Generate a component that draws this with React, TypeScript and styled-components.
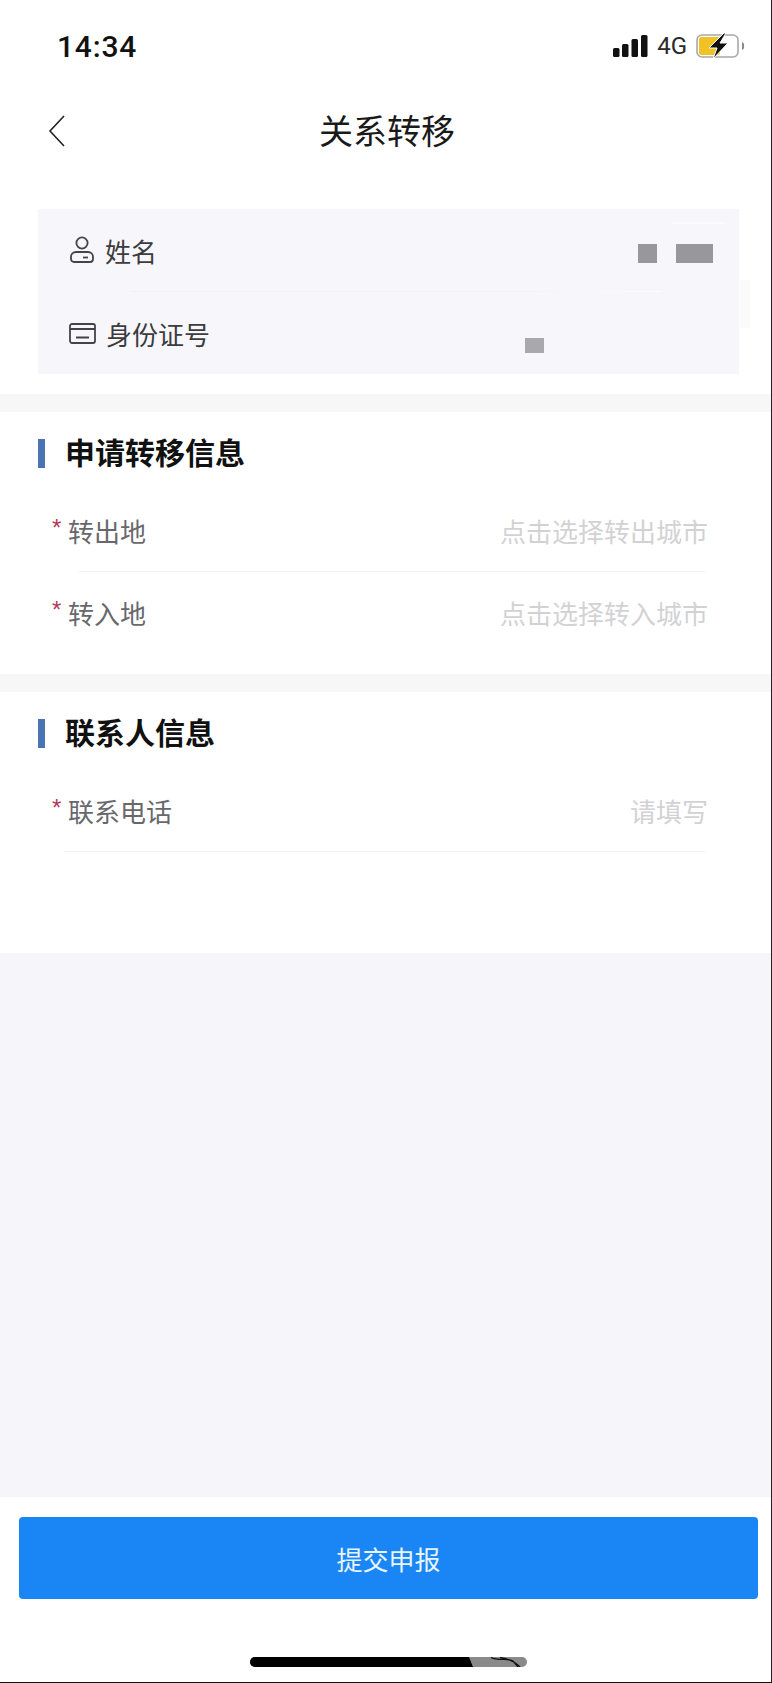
import React from "react";
import styled, { createGlobalStyle } from "styled-components";

const GlobalStyle = createGlobalStyle`
    html, body {
        margin: 0;
        padding: 0;
        background: #fff;
    }
    body {
        font-family: "Liberation Sans", "Noto Sans CJK SC", sans-serif;
    }
`;

const Page = styled.div`
    width: 772px;
    height: 1683px;
    box-sizing: border-box;
    display: flex;
    flex-direction: column;
    overflow: hidden;
    background: #f6f6fa;
    border-right: 1px solid #222;
    border-bottom: 1px solid #111;
    font-family: "Noto Sans CJK SC", sans-serif;
`;

const Top = styled.div`
    background: #fff;
    padding-bottom: 20px;
`;

const StatusBar = styled.div`
    height: 46px;
    padding: 23px 26px 0 57px;
    display: flex;
    align-items: center;
    justify-content: space-between;
`;

const Time = styled.span`
    font-family: Roboto, sans-serif;
    font-weight: 500;
    font-size: 30px;
    letter-spacing: 0.8px;
    color: #111;
`;

const StatusIcons = styled.div`
    display: flex;
    align-items: center;
    gap: 9px;
`;

const Network = styled.span`
    font-family: Roboto, sans-serif;
    font-size: 24px;
    color: #2a2a2a;
`;

const NavBar = styled.div`
    position: relative;
    height: 69px;
    margin-top: 26px;
    display: flex;
    align-items: center;
    justify-content: center;
`;

const BackIcon = styled.svg`
    position: absolute;
    left: 48px;
    top: 20px;
`;

const NavTitle = styled.h1`
    margin: 0;
    padding-left: 3px;
    font-size: 34px;
    font-weight: 400;
    color: #1a1a1a;
`;

const IdCard = styled.div`
    position: relative;
    margin: 45px 32px 0 38px;
    height: 165px;
    background: #f7f7fb;
    display: flex;
    flex-direction: column;

    /* leftovers of the retouching over the original id values */
    &::before {
        content: "";
        position: absolute;
        top: 13px;
        right: 14px;
        width: 53px;
        height: 2px;
        background: #fbfbfd;
    }
    &::after {
        content: "";
        position: absolute;
        top: 71px;
        right: -11px;
        width: 11px;
        height: 48px;
        background: #fbfbfc;
    }
`;

const IdRow = styled.div`
    flex: 1;
    display: flex;
    align-items: center;
    padding: 0 26px 0 31px;
`;

const IdDivider = styled.div`
    height: 1px;
    margin: 0 78px 0 92px;
    background: linear-gradient(90deg, #f1f1f5 70%, #fdfdfe);
`;

const IdLabel = styled.span`
    margin-left: 10px;
    font-size: 26px;
    color: #3c3c40;
`;

const Masked = styled.div<{ $offset: number; $drop: number }>`
    margin-left: auto;
    margin-right: ${props => props.$offset}px;
    margin-top: ${props => props.$drop}px;
    display: flex;
    gap: 19px;
`;

const MaskBlock = styled.div<{ $w: number; $h: number; $tone: string }>`
    width: ${props => props.$w}px;
    height: ${props => props.$h}px;
    background: ${props => props.$tone};
`;

const Band = styled.div`
    height: 18px;
    background: #f7f7f8;
`;

const Section = styled.section<{ $height: number }>`
    height: ${props => props.$height}px;
    background: #fff;
    padding-top: 27px;
    box-sizing: border-box;
`;

const SectionHead = styled.div`
    display: flex;
    align-items: center;
    gap: 20px;
    padding-left: 38px;
    height: 29px;
`;

const Accent = styled.div`
    width: 7px;
    height: 29px;
    background: #4a74b4;
`;

const SectionTitle = styled.h2`
    margin: 0;
    padding-bottom: 5px;
    font-size: 30px;
    font-weight: 700;
    color: #111;
`;

const Rows = styled.div`
    margin-top: 22px;
`;

const Field = styled.div`
    position: relative;
    height: 81px;
    margin: 0 63px 0 68px;
    display: flex;
    align-items: center;
    justify-content: space-between;
`;

const FieldDivider = styled.div<{ $left: number }>`
    height: 1px;
    margin: 0 66px 0 ${props => props.$left}px;
    background: #f3f3f5;
`;

const Star = styled.span`
    position: absolute;
    left: -16px;
    top: 25px;
    font-family: "Liberation Sans", sans-serif;
    font-size: 24px;
    line-height: 25px;
    color: #b5395a;
`;

const FieldLabel = styled.span`
    font-size: 26px;
    color: #68686c;
`;

const Placeholder = styled.span`
    font-size: 26px;
    color: #d2d2d5;
`;

const Spacer = styled.div`
    flex: 1;
`;

const Footer = styled.div`
    position: relative;
    height: 185px;
    background: #fff;
    padding: 20px 13px 0 19px;
    box-sizing: border-box;
`;

const SubmitButton = styled.button`
    width: 100%;
    height: 82px;
    border: 0;
    border-radius: 4px;
    background: #1a86f5;
    color: #e8f4ff;
    font-family: inherit;
    font-size: 26px;
`;

const HomeIndicator = styled.svg`
    position: absolute;
    left: 250px;
    bottom: 15px;
`;

const PersonIcon = () => (
    <svg width="26" height="28" viewBox="0 0 26 28" fill="none" stroke="#444448" strokeWidth="1.8">
        <circle cx="13" cy="7" r="5.6" />
        <path d="M7 16h12a5 5 0 0 1 5 5v2a3 3 0 0 1-3 3H5a3 3 0 0 1-3-3v-2a5 5 0 0 1 5-5z" />
        <path d="M14 21.5h5" />
    </svg>
);

const CardIcon = () => (
    <svg width="27" height="21" viewBox="0 0 27 21" fill="none" stroke="#444448" strokeWidth="1.8">
        <rect x="1" y="1" width="25" height="19" rx="2" />
        <path d="M1 6h25M7 14.5h13" />
    </svg>
);

const SignalIcon = () => (
    <svg width="35" height="22" viewBox="0 0 35 22" fill="#111">
        <rect x="0" y="13" width="6.5" height="9" rx="1.5" />
        <rect x="9" y="9" width="6.5" height="13" rx="1.5" />
        <rect x="18.5" y="4" width="6.5" height="18" rx="1.5" />
        <rect x="28" y="0" width="6.5" height="22" rx="1.5" />
    </svg>
);

const BatteryIcon = () => (
    <svg width="49" height="26" viewBox="0 0 49 26" fill="none">
        <rect x="1" y="2" width="41" height="22" rx="5" stroke="#a8a8a8" strokeWidth="1.6" />
        <rect x="3" y="4" width="21" height="18" rx="2.5" fill="#f2c225" />
        <path d="M46 9v8a3.5 3.5 0 0 0 2-4 3.5 3.5 0 0 0-2-4z" fill="#8a8a8a" />
        <path d="M28 0L13 15h8l-4 11 15-16h-8l6-10z" fill="#111" stroke="#fff" strokeWidth="1" />
    </svg>
);

export default () => {
    return (
        <Page>
            <GlobalStyle />
            <Top>
                <StatusBar>
                    <Time>14:34</Time>
                    <StatusIcons>
                        <SignalIcon />
                        <Network>4G</Network>
                        <BatteryIcon />
                    </StatusIcons>
                </StatusBar>
                <NavBar>
                    <BackIcon width="18" height="32" viewBox="0 0 18 32" fill="none" stroke="#222" strokeWidth="1.6">
                        <path d="M16 1L2 16l14 15" />
                    </BackIcon>
                    <NavTitle>关系转移</NavTitle>
                </NavBar>
                <IdCard>
                    <IdRow>
                        <PersonIcon />
                        <IdLabel>姓名</IdLabel>
                        <Masked $offset={0} $drop={7}>
                            <MaskBlock $w={19} $h={19} $tone="#98979c" />
                            <MaskBlock $w={37} $h={19} $tone="#98979c" />
                        </Masked>
                    </IdRow>
                    <IdDivider />
                    <IdRow>
                        <CardIcon />
                        <IdLabel>身份证号</IdLabel>
                        <Masked $offset={169} $drop={25}>
                            <MaskBlock $w={19} $h={15} $tone="#a9a9ad" />
                        </Masked>
                    </IdRow>
                </IdCard>
            </Top>
            <Band />
            <Section $height={262}>
                <SectionHead>
                    <Accent />
                    <SectionTitle>申请转移信息</SectionTitle>
                </SectionHead>
                <Rows>
                    <Field>
                        <Star>*</Star>
                        <FieldLabel>转出地</FieldLabel>
                        <Placeholder>点击选择转出城市</Placeholder>
                    </Field>
                    <FieldDivider $left={79} />
                    <Field>
                        <Star>*</Star>
                        <FieldLabel>转入地</FieldLabel>
                        <Placeholder>点击选择转入城市</Placeholder>
                    </Field>
                </Rows>
            </Section>
            <Band />
            <Section $height={261}>
                <SectionHead>
                    <Accent />
                    <SectionTitle>联系人信息</SectionTitle>
                </SectionHead>
                <Rows>
                    <Field>
                        <Star>*</Star>
                        <FieldLabel>联系电话</FieldLabel>
                        <Placeholder>请填写</Placeholder>
                    </Field>
                    <FieldDivider $left={64} />
                </Rows>
            </Section>
            <Spacer />
            <Footer>
                <SubmitButton>提交申报</SubmitButton>
                <HomeIndicator width="277" height="10" viewBox="0 0 277 10">
                    <rect width="277" height="10" rx="5" fill="#8a8a8a" />
                    <path d="M5 0H219l4 10H5a5 5 0 0 1 0-10z" fill="#000" />
                    <path d="M241 0.5c8 4 15 0 22 3.5l5 6M250 0.5c7 1 14 3 20 9.5" fill="none" stroke="#111" strokeWidth="1.3" />
                </HomeIndicator>
            </Footer>
        </Page>
    );
};
